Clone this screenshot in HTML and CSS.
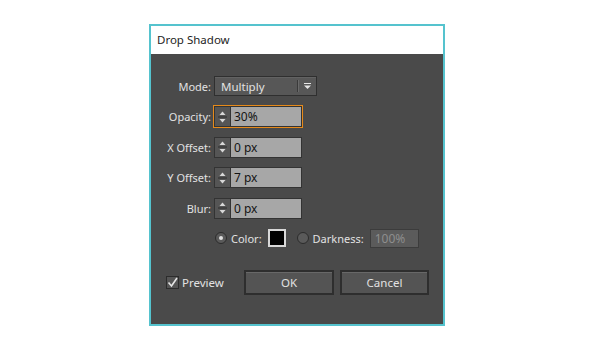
FILE: index.html
```html
<!DOCTYPE html>
<html lang="en">
<head>
  <meta charset="UTF-8">
  <title>Drop Shadow</title>
  <link rel="stylesheet" href="styles.css">
</head>
<body>

  <div class="dialog">
    <div class="titlebar">Drop Shadow</div>

    <div class="content">
      <div class="form">
        <span class="lbl">Mode:</span>
        <div class="select">
          <span class="select-text">Multiply</span>
          <span class="select-sep"></span>
          <span class="select-arrow">
            <svg width="9" height="7" viewBox="0 0 9 7"><rect x="1" y="0" width="7" height="1" fill="#e6e6e6"/><path d="M1 2.5 H8 L4.5 6 Z" fill="#e6e6e6"/></svg>
          </span>
        </div>

        <span class="lbl">Opacity:</span>
        <div class="focus-ring">
          <div class="num">
            <span class="spin">
              <svg width="15" height="18" viewBox="0 0 15 18"><path d="M4.5 7 L7.5 3.5 L10.5 7 Z" fill="#d8d8d8"/><rect x="3" y="8.5" width="9" height="1" fill="#2e2e2e"/><path d="M4.5 11 L7.5 14.5 L10.5 11 Z" fill="#d8d8d8"/></svg>
            </span>
            <span class="num-field">30%</span>
          </div>
        </div>

        <span class="lbl">X Offset:</span>
        <div class="num">
          <span class="spin">
            <svg width="15" height="18" viewBox="0 0 15 18"><path d="M4.5 7 L7.5 3.5 L10.5 7 Z" fill="#d8d8d8"/><rect x="3" y="8.5" width="9" height="1" fill="#2e2e2e"/><path d="M4.5 11 L7.5 14.5 L10.5 11 Z" fill="#d8d8d8"/></svg>
          </span>
          <span class="num-field">0 px</span>
        </div>

        <span class="lbl">Y Offset:</span>
        <div class="num">
          <span class="spin">
            <svg width="15" height="18" viewBox="0 0 15 18"><path d="M4.5 7 L7.5 3.5 L10.5 7 Z" fill="#d8d8d8"/><rect x="3" y="8.5" width="9" height="1" fill="#2e2e2e"/><path d="M4.5 11 L7.5 14.5 L10.5 11 Z" fill="#d8d8d8"/></svg>
          </span>
          <span class="num-field">7 px</span>
        </div>

        <span class="lbl">Blur:</span>
        <div class="num">
          <span class="spin">
            <svg width="15" height="18" viewBox="0 0 15 18"><path d="M4.5 7 L7.5 3.5 L10.5 7 Z" fill="#d8d8d8"/><rect x="3" y="8.5" width="9" height="1" fill="#2e2e2e"/><path d="M4.5 11 L7.5 14.5 L10.5 11 Z" fill="#d8d8d8"/></svg>
          </span>
          <span class="num-field">0 px</span>
        </div>

        <span class="lbl"></span>
        <div class="color-row">
          <span class="radio checked"></span>
          <span class="opt">Color:</span>
          <span class="swatch"></span>
          <span class="radio dark"></span>
          <span class="opt">Darkness:</span>
          <span class="dark-field">100%</span>
        </div>
      </div>

      <div class="footer">
        <div class="preview">
          <span class="check">
            <svg width="11" height="11" viewBox="0 0 11 11"><path d="M1.5 5.5 L4.5 9 L10 1" fill="none" stroke="#e6e6e6" stroke-width="1.6"/></svg>
          </span>
          <span>Preview</span>
        </div>
        <div class="buttons">
          <button class="btn ok">OK</button>
          <button class="btn cancel">Cancel</button>
        </div>
      </div>
    </div>
  </div>

</body>
</html>
```

FILE: styles.css
```css
body {
  margin: 0;
  background-color: #ffffff;
  font-family: 'Noto Sans', 'Open Sans', sans-serif;
  font-size: 11px;
}
.dialog {
  margin: 24px 0 0 149px;
  width: 292px;
  height: 298px;
  border: 2px solid #55c3ce;
  display: flex;
  flex-direction: column;
}
.titlebar {
  height: 28px;
  background-color: #ffffff;
  color: #1e1e1e;
  font-size: 11.5px;
  line-height: 28px;
  padding-left: 6px;
}
.content {
  flex: 1;
  background-color: #4a4a4a;
  color: #e2e2e2;
  padding: 22px 14px 0 14px;
}
.form {
  display: grid;
  grid-template-columns: 46px 1fr;
  grid-template-rows: 20px 21px 20px 21px 20px 20px;
  column-gap: 3px;
  row-gap: 10px;
  align-items: center;
}
.lbl {
  text-align: right;
  white-space: nowrap;
}
.select {
  width: 101px;
  height: 18px;
  border: 1px solid #2f2f2f;
  background-color: #575757;
  display: flex;
  align-items: center;
  box-shadow: inset 0 1px 0 #626262;
}
.select-text {
  flex: 1;
  padding-left: 6px;
  font-size: 11.5px;
}
.select-sep {
  width: 1px;
  height: 12px;
  background-color: #3a3a3a;
  border-right: 1px solid #6a6a6a;
}
.select-arrow {
  width: 17px;
  display: flex;
  justify-content: center;
}
.focus-ring {
  width: 88px;
  margin-left: -1px;
  border: 1px solid #e68a1a;
}
.num {
  display: flex;
  width: 86px;
  height: 19px;
  border: 1px solid #333333;
}
.spin {
  width: 15px;
  background-color: #555555;
  border-right: 1px solid #333333;
  display: flex;
  align-items: center;
}
.num-field {
  flex: 1;
  background-color: #a7a7a7;
  color: #141414;
  padding-left: 3px;
  line-height: 19px;
  font-size: 12px;
}
.color-row {
  display: flex;
  align-items: center;
  height: 20px;
}
.radio {
  width: 10px;
  height: 10px;
  border-radius: 50%;
  border: 1px solid #2c2c2c;
  background-color: #5a5a5a;
  margin-left: 1px;
  position: relative;
}
.radio.checked::after {
  content: "";
  position: absolute;
  left: 3px;
  top: 3px;
  width: 4px;
  height: 4px;
  border-radius: 50%;
  background-color: #e0e0e0;
}
.radio.dark {
  margin-left: 11px;
}
.opt {
  margin-left: 4px;
}
.swatch {
  width: 14px;
  height: 14px;
  background-color: #000000;
  border: 2px solid #d8d8d8;
  margin-left: 6px;
}
.dark-field {
  margin-left: 6px;
  width: 43px;
  height: 17px;
  line-height: 17px;
  padding-left: 4px;
  background-color: #5b5b5b;
  border: 1px solid #3c3c3c;
  color: #8e8e8e;
  font-size: 12px;
}
.footer {
  display: flex;
  align-items: center;
  justify-content: space-between;
  margin-top: 22px;
}
.preview {
  display: flex;
  align-items: center;
  gap: 3px;
  padding-left: 1px;
  font-size: 11.5px;
}
.check {
  width: 11px;
  height: 11px;
  border: 1px solid #2c2c2c;
  background-color: #555555;
  display: flex;
}
.buttons {
  display: flex;
  gap: 6px;
}
.btn {
  height: 25px;
  font-family: inherit;
  font-size: 11.5px;
  color: #e2e2e2;
  background-color: #545454;
  border: 2px solid #2e2e2e;
  box-shadow: inset 0 1px 0 #686868;
}
.ok {
  width: 90px;
}
.cancel {
  width: 89px;
}
```
